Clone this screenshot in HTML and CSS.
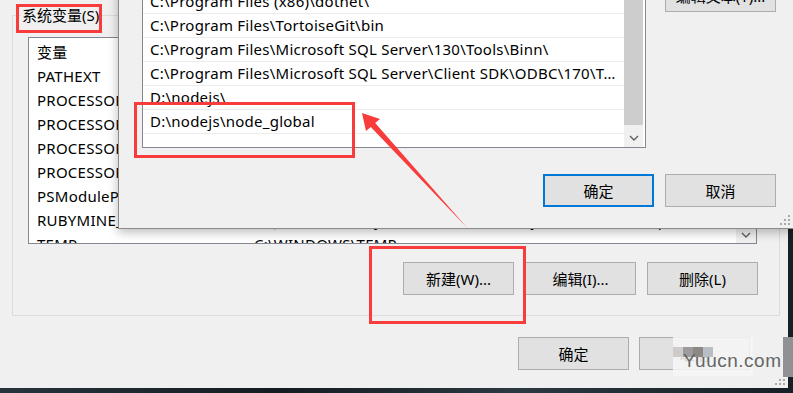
FILE: index.html
```html
<!DOCTYPE html>
<html lang="zh-CN">
<head>
	<meta charset="UTF-8">
	<title>环境变量</title>
	<link rel="stylesheet" href="styles.css">
</head>
<body>
	<div class="desk">
		<!-- 环境变量 -->
		<div class="win win-back">
			<div class="group">
				<span class="group-title">系统变量(S)</span>
				<div class="listview">
					<div class="lv-rows">
						<div class="lv-row lv-head"><span class="c1">变量</span><span class="c2">值</span></div>
						<div class="lv-row"><span class="c1">PATHEXT</span><span class="c2">.COM;.EXE;.BAT;.CMD;.VBS;.VBE;.JS;.JSE;.WSF;.WSH;.MSC</span></div>
						<div class="lv-row"><span class="c1">PROCESSOR_ARCHITECTURE</span><span class="c2">AMD64</span></div>
						<div class="lv-row"><span class="c1">PROCESSOR_IDENTIFIER</span><span class="c2">Intel64 Family 6 Model 158 Stepping 9, GenuineIntel</span></div>
						<div class="lv-row"><span class="c1">PROCESSOR_LEVEL</span><span class="c2">6</span></div>
						<div class="lv-row"><span class="c1">PROCESSOR_REVISION</span><span class="c2">9e09</span></div>
						<div class="lv-row"><span class="c1">PSModulePath</span><span class="c2">%ProgramFiles%\WindowsPowerShell\Modules;C:\WINDOWS\system32</span></div>
						<div class="lv-row"><span class="c1">RUBYMINE_VM_OPTIONS</span><span class="c2">D:\JetBrains\RubyMine 2018.3\bin\rubymine64.exe.vmoptions</span></div>
						<div class="lv-row"><span class="c1">TEMP</span><span class="c2">C:\WINDOWS\TEMP</span></div>
						<div class="lv-row"><span class="c1">TMP</span><span class="c2">C:\WINDOWS\TEMP</span></div>
					</div>
					<div class="lv-scroll">
						<div class="sc-down">
							<svg width="10" height="6" viewBox="0 0 10 6"><path d="M1 1l4 4 4-4" fill="none" stroke="#606060" stroke-width="1.4"/></svg>
						</div>
					</div>
				</div>
				<div class="btn-row">
					<button class="btn">新建(W)...</button>
					<button class="btn">编辑(I)...</button>
					<button class="btn">删除(L)</button>
				</div>
			</div>
			<div class="foot">
				<button class="btn">确定</button>
				<button class="btn">取消</button>
			</div>
			<svg class="grip" width="10" height="10" viewBox="0 0 10 10"><path d="M8 0h2v2H8zM4 4h2v2H4zM8 4h2v2H8zM0 8h2v2H0zM4 8h2v2H4zM8 8h2v2H8z" fill="#a9a9a9"/></svg>
		</div>

		<!-- 编辑环境变量 -->
		<div class="win win-front">
			<div class="front-top">
				<div class="pathlist">
					<div class="pl-rows">
						<div class="pl-row">C:\Program Files\Git\cmd</div>
						<div class="pl-row">C:\Program Files (x86)\dotnet\</div>
						<div class="pl-row">C:\Program Files\TortoiseGit\bin</div>
						<div class="pl-row">C:\Program Files\Microsoft SQL Server\130\Tools\Binn\</div>
						<div class="pl-row">C:\Program Files\Microsoft SQL Server\Client SDK\ODBC\170\T…</div>
						<div class="pl-row">D:\nodejs\</div>
						<div class="pl-row">D:\nodejs\node_global</div>
						<div class="pl-row"></div>
					</div>
					<div class="pl-scroll">
						<div class="pl-thumb"></div>
						<div class="sc-down pl-down">
							<svg width="10" height="6" viewBox="0 0 10 6"><path d="M1 1l4 4 4-4" fill="none" stroke="#606060" stroke-width="1.4"/></svg>
						</div>
					</div>
				</div>
				<div class="side">
					<button class="btn">编辑文本(T)...</button>
				</div>
			</div>
			<div class="foot front-foot">
				<button class="btn btn-default">确定</button>
				<button class="btn">取消</button>
			</div>
			<svg class="grip" width="10" height="10" viewBox="0 0 10 10"><path d="M8 0h2v2H8zM4 4h2v2H4zM8 4h2v2H8zM0 8h2v2H0zM4 8h2v2H4zM8 8h2v2H8z" fill="#a9a9a9"/></svg>
		</div>

		<div class="watermark">
			<span class="wm-dot wm-a"></span><span class="wm-dot wm-b"></span><span class="wm-dot wm-c"></span><span class="wm-dot wm-d"></span>
		</div>
		<div class="wm-edge"></div>
		<span class="wm-text">Yuucn.com</span>

		<!-- 标注 -->
		<svg class="marks" width="793" height="393" viewBox="0 0 793 393">
			<g fill="none" stroke="#f83c3c" stroke-width="3">
				<rect x="17.5" y="5.5" width="83" height="26"/>
				<rect x="135.5" y="103.5" width="218" height="53"/>
				<rect x="370.5" y="247.5" width="154" height="75"/>
			</g>
			<polygon fill="#f83c3c" points="362,113 380,119 375.2,123 467.8,228.5 370.8,127 366,131"/>
		</svg>
	</div>
</body>
</html>
```

FILE: styles.css
```css
*{
	margin: 0;
	padding: 0;
	box-sizing: border-box;
}
body{
	width: 793px;
	height: 393px;
	overflow: hidden;
	background: #1b262d;
	font-family: "Noto Sans", "Noto Sans CJK SC", sans-serif;
	font-size: 15px;
	color: #000;
}
.desk{
	position: relative;
	width: 793px;
	height: 393px;
	overflow: hidden;
	background: linear-gradient(90deg, #26343c, #141c21 35%, #2b3940 65%, #161f25);
}
.win{
	position: absolute;
	background: #f0f0f0;
}
.btn{
	width: 111px;
	height: 33px;
	border: 1px solid #adadad;
	background: #e1e1e1;
	font: inherit;
	color: #000;
	flex-shrink: 0;
}
.btn-default{
	border: 2px solid #0078d7;
}
.grip{
	position: absolute;
	right: 3px;
	bottom: 3px;
}

/* back window */
.win-back{
	left: 0;
	top: 0;
	width: 788px;
	height: 388px;
	padding: 15px 0 0 12px;
}
.group{
	position: relative;
	width: 768px;
	height: 301px;
	border: 1px solid #dcdcdc;
	padding: 21px 0 0 15px;
}
.group-title{
	position: absolute;
	left: 8px;
	top: -11px;
	padding: 0 1px;
	line-height: 20px;
	background: #f0f0f0;
}
.listview{
	display: flex;
	width: 729px;
	height: 207px;
	border: 1px solid #828790;
	background: #fff;
}
.lv-rows{
	flex: 1;
	overflow: hidden;
}
.lv-row{
	display: flex;
	align-items: center;
	height: 24px;
	white-space: nowrap;
	letter-spacing: 0.25px;
}
.lv-head{
	height: 26px;
}
.c1{
	width: 225px;
	padding-left: 8px;
	flex-shrink: 0;
	overflow: hidden;
}
.lv-scroll{
	width: 20px;
	display: flex;
	flex-direction: column;
	justify-content: flex-end;
	background: #f0f0f0;
}
.sc-down{
	height: 17px;
	display: flex;
	align-items: center;
	justify-content: center;
}
.btn-row{
	display: flex;
	justify-content: flex-end;
	gap: 11px;
	width: 730px;
	margin-top: 18px;
}
.foot{
	display: flex;
	justify-content: flex-end;
	gap: 10px;
	margin-top: 21px;
	padding-right: 38px;
}

/* front window */
.win-front{
	left: 118px;
	top: -61px;
	width: 676px;
	height: 290px;
	border: 1px solid #8b8b8b;
	padding: 25px 0 0 23px;
	box-shadow: 0 3px 10px rgba(0,0,0,0.28);
}
.front-top{
	display: flex;
	gap: 19px;
}
.pathlist{
	display: flex;
	width: 504px;
	height: 183px;
	border: 1px solid #828790;
	background: #fff;
}
.pl-rows{
	flex: 1;
	overflow: hidden;
}
.pl-row{
	height: 24px;
	line-height: 23px;
	padding-left: 7px;
	border-bottom: 1px solid #ececec;
	white-space: nowrap;
	letter-spacing: 0.25px;
}
.pl-scroll{
	width: 19px;
	margin-right: 2px;
	display: flex;
	flex-direction: column;
	background: #f0f0f0;
}
.pl-thumb{
	flex: 1;
	background: #cdcdcd;
	margin-bottom: 3px;
}
.pl-down{
	height: 19px;
}
.side{
	padding-top: 14px;
}
.front-foot{
	margin-top: 26px;
	gap: 11px;
	padding-right: 17px;
}

/* watermark */
.watermark{
	position: absolute;
	left: 673px;
	top: 337px;
	width: 80px;
	height: 39px;
	background: rgba(246,246,246,0.85);
}
.wm-dot{
	position: absolute;
	top: 10px;
	width: 10px;
	height: 10px;
}
.wm-a{ left: 0; background: #cfcbca; }
.wm-b{ left: 10px; background: #9c9c9e; }
.wm-c{ left: 20px; background: #8e8885; }
.wm-d{ left: 30px; background: #b9bdc4; }
.wm-edge{
	position: absolute;
	left: 783px;
	top: 337px;
	width: 10px;
	height: 40px;
	background: #8f9192;
}
.wm-text{
	position: absolute;
	left: 683px;
	top: 350px;
	font-family: "Liberation Sans", sans-serif;
	font-size: 19px;
	letter-spacing: 0.5px;
	line-height: 22px;
	color: #666;
}
.marks{
	position: absolute;
	left: 0;
	top: 0;
	pointer-events: none;
}
```
